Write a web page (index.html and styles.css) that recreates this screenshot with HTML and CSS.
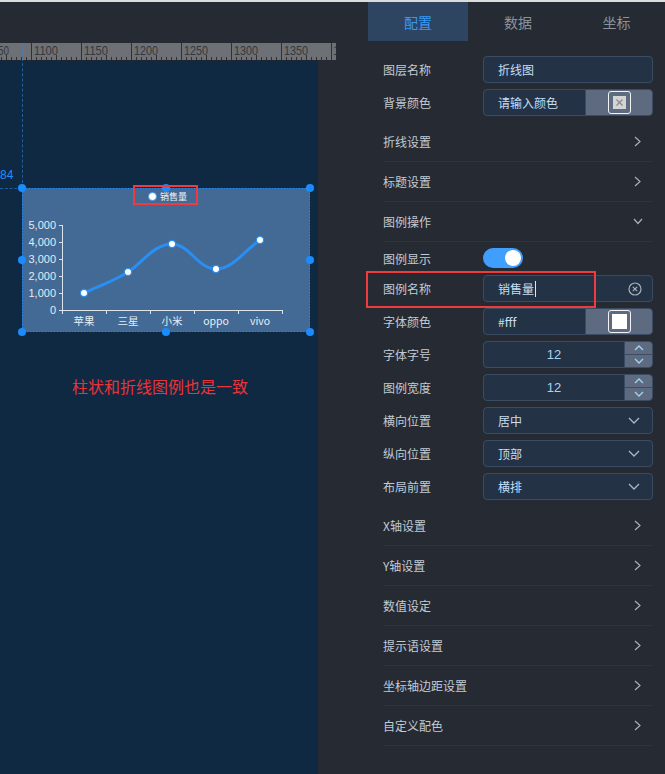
FILE: index.html
```html
<!DOCTYPE html>
<html lang="zh-CN">
<head>
<meta charset="utf-8">
<title>折线图配置</title>
<link rel="stylesheet" href="styles.css">
</head>
<body>
<div class="app">
  <section class="stage">
    <div class="stage-top"></div>
    <div class="ruler">
      <svg class="ruler-svg" width="336" height="17" viewBox="0 0 336 17">
        <g class="ruler-ticks">
          <path d="M31.5,0V17M81.5,0V17M131.5,0V17M181.5,0V17M231.5,0V17M281.5,0V17M331.5,0V17"/>
          <path d="M1.5,14V17M6.5,14V17M11.5,14V17M16.5,14V17M21.5,14V17M26.5,14V17M36.5,14V17M41.5,14V17M46.5,14V17M51.5,14V17M61.5,14V17M66.5,14V17M71.5,14V17M76.5,14V17M86.5,14V17M91.5,14V17M96.5,14V17M101.5,14V17M111.5,14V17M116.5,14V17M121.5,14V17M126.5,14V17M136.5,14V17M141.5,14V17M146.5,14V17M151.5,14V17M161.5,14V17M166.5,14V17M171.5,14V17M176.5,14V17M186.5,14V17M191.5,14V17M196.5,14V17M201.5,14V17M211.5,14V17M216.5,14V17M221.5,14V17M226.5,14V17M236.5,14V17M241.5,14V17M246.5,14V17M251.5,14V17M261.5,14V17M266.5,14V17M271.5,14V17M276.5,14V17M286.5,14V17M291.5,14V17M296.5,14V17M301.5,14V17M311.5,14V17M316.5,14V17M321.5,14V17M326.5,14V17"/>
          <path d="M6.5,12V17M56.5,12V17M106.5,12V17M156.5,12V17M206.5,12V17M256.5,12V17M306.5,12V17"/>
        </g>
        <g class="ruler-text">
          <text x="-2" y="12" textLength="11" lengthAdjust="spacingAndGlyphs">50</text>
          <text x="34" y="12" textLength="24" lengthAdjust="spacingAndGlyphs">1100</text>
          <text x="84" y="12" textLength="24" lengthAdjust="spacingAndGlyphs">1150</text>
          <text x="134" y="12" textLength="24" lengthAdjust="spacingAndGlyphs">1200</text>
          <text x="184" y="12" textLength="24" lengthAdjust="spacingAndGlyphs">1250</text>
          <text x="234" y="12" textLength="24" lengthAdjust="spacingAndGlyphs">1300</text>
          <text x="284" y="12" textLength="24" lengthAdjust="spacingAndGlyphs">1350</text>
          <text x="333" y="12">1</text>
        </g>
      </svg>
    </div>
    <div class="canvas-row">
      <div class="canvas">
        <span class="coord">84</span>
        <div class="guide-h"></div>
        <svg class="widget" width="300" height="156" viewBox="-6 -6 300 156">
          <rect class="w-bg" x="0.5" y="0.5" width="287" height="143"/>
          <g class="axis">
            <path d="M40.5,37V122.5H261"/>
            <path d="M37,37.5H40.5M37,54.5H40.5M37,71.5H40.5M37,88.5H40.5M37,105.5H40.5M37,122.5H40.5"/>
            <path d="M40.5,122V126M84.5,122V126M128.5,122V126M172.5,122V126M216.5,122V126M260.5,122V126"/>
          </g>
          <g class="ylab">
            <text x="34" y="41">5,000</text>
            <text x="34" y="58">4,000</text>
            <text x="34" y="75">3,000</text>
            <text x="34" y="92">2,000</text>
            <text x="34" y="109">1,000</text>
            <text x="34" y="126">0</text>
          </g>
          <g class="xlab">
            <text x="62" y="136.5">苹果</text>
            <text x="106" y="136.5">三星</text>
            <text x="150" y="136.5">小米</text>
            <text x="194" y="136.5">oppo</text>
            <text x="238" y="136.5">vivo</text>
          </g>
          <path class="line" d="M62,105 C77,98 92,93 106,84 C120,75 132,56 150,56 C167,56 176,81 194,81 C211,81 223,62 238,52"/>
          <g class="pts">
            <circle cx="62" cy="105" r="3.6"/>
            <circle cx="106" cy="84" r="3.6"/>
            <circle cx="150" cy="56" r="3.6"/>
            <circle cx="194" cy="81" r="3.6"/>
            <circle cx="238" cy="52" r="3.6"/>
          </g>
          <g class="handles">
            <circle cx="0" cy="0" r="4"/>
            <circle cx="144" cy="0" r="4"/>
            <circle cx="288" cy="0" r="4"/>
            <circle cx="0" cy="72" r="4"/>
            <circle cx="288" cy="72" r="4"/>
            <circle cx="0" cy="144" r="4"/>
            <circle cx="144" cy="144" r="4"/>
            <circle cx="288" cy="144" r="4"/>
          </g>
          <circle class="legend-dot" cx="130.5" cy="8.5" r="4"/>
          <text class="legend-text" x="138" y="12">销售量</text>
          <rect class="mark" x="112" y="-2" width="63" height="18"/>
        </svg>
        <p class="note">柱状和折线图例也是一致</p>
      </div>
    </div>
    <div class="guide-v"></div>
  </section>

  <aside class="panel">
    <nav class="tabs">
      <span class="tab active">配置</span>
      <span class="tab">数据</span>
      <span class="tab tab-last">坐标</span>
    </nav>
    <div class="form">
      <div class="row">
        <label class="label">图层名称</label>
        <div class="field"><span class="val">折线图</span></div>
      </div>
      <div class="row">
        <label class="label">背景颜色</label>
        <div class="field color">
          <span class="val">请输入颜色</span>
          <span class="swatch-wrap"><span class="swatch empty"><svg width="13" height="13" viewBox="0 0 13 13"><rect width="13" height="13" fill="#d4d4d4"/><path d="M3.5,3.5L9.5,9.5M9.5,3.5L3.5,9.5" stroke="#8a8a8a" stroke-width="1.2"/></svg></span></span>
        </div>
      </div>

      <div class="coll">折线设置<svg class="chev" width="7" height="11" viewBox="0 0 7 11"><path d="M1,1L6,5.5L1,10"/></svg></div>
      <div class="coll">标题设置<svg class="chev" width="7" height="11" viewBox="0 0 7 11"><path d="M1,1L6,5.5L1,10"/></svg></div>
      <div class="coll">图例操作<svg class="chev down" width="10" height="7" viewBox="0 0 10 7"><path d="M1,1L5,5.5L9,1"/></svg></div>

      <div class="sub">
        <div class="row toggle-row">
          <label class="label">图例显示</label>
          <span class="switch"><span class="knob"></span></span>
        </div>
        <div class="row marked">
          <label class="label">图例名称</label>
          <div class="field">
            <span class="val">销售量<i class="caret"></i></span>
            <svg class="clear" width="14" height="14" viewBox="0 0 14 14"><circle cx="7" cy="7" r="6"/><path d="M4.8,4.8L9.2,9.2M9.2,4.8L4.8,9.2"/></svg>
          </div>
          <span class="redbox"></span>
        </div>
        <div class="row">
          <label class="label">字体颜色</label>
          <div class="field color">
            <span class="val">#fff</span>
            <span class="swatch-wrap"><span class="swatch white"></span></span>
          </div>
        </div>
        <div class="row">
          <label class="label">字体字号</label>
          <div class="field num">
            <span class="numval">12</span>
            <span class="spin">
              <span class="spin-btn"><svg width="10" height="6" viewBox="0 0 10 6"><path d="M1,5L5,1L9,5"/></svg></span>
              <span class="spin-btn"><svg width="10" height="6" viewBox="0 0 10 6"><path d="M1,1L5,5L9,1"/></svg></span>
            </span>
          </div>
        </div>
        <div class="row">
          <label class="label">图例宽度</label>
          <div class="field num">
            <span class="numval">12</span>
            <span class="spin">
              <span class="spin-btn"><svg width="10" height="6" viewBox="0 0 10 6"><path d="M1,5L5,1L9,5"/></svg></span>
              <span class="spin-btn"><svg width="10" height="6" viewBox="0 0 10 6"><path d="M1,1L5,5L9,1"/></svg></span>
            </span>
          </div>
        </div>
        <div class="row">
          <label class="label">横向位置</label>
          <div class="field select"><span class="val">居中</span><svg class="sel-arrow" width="12" height="7" viewBox="0 0 12 7"><path d="M1,1L6,6L11,1"/></svg></div>
        </div>
        <div class="row">
          <label class="label">纵向位置</label>
          <div class="field select"><span class="val">顶部</span><svg class="sel-arrow" width="12" height="7" viewBox="0 0 12 7"><path d="M1,1L6,6L11,1"/></svg></div>
        </div>
        <div class="row">
          <label class="label">布局前置</label>
          <div class="field select"><span class="val">横排</span><svg class="sel-arrow" width="12" height="7" viewBox="0 0 12 7"><path d="M1,1L6,6L11,1"/></svg></div>
        </div>
      </div>

      <div class="coll">X轴设置<svg class="chev" width="7" height="11" viewBox="0 0 7 11"><path d="M1,1L6,5.5L1,10"/></svg></div>
      <div class="coll">Y轴设置<svg class="chev" width="7" height="11" viewBox="0 0 7 11"><path d="M1,1L6,5.5L1,10"/></svg></div>
      <div class="coll">数值设定<svg class="chev" width="7" height="11" viewBox="0 0 7 11"><path d="M1,1L6,5.5L1,10"/></svg></div>
      <div class="coll">提示语设置<svg class="chev" width="7" height="11" viewBox="0 0 7 11"><path d="M1,1L6,5.5L1,10"/></svg></div>
      <div class="coll">坐标轴边距设置<svg class="chev" width="7" height="11" viewBox="0 0 7 11"><path d="M1,1L6,5.5L1,10"/></svg></div>
      <div class="coll">自定义配色<svg class="chev" width="7" height="11" viewBox="0 0 7 11"><path d="M1,1L6,5.5L1,10"/></svg></div>
    </div>
  </aside>
</div>
</body>
</html>
```
FILE: styles.css
```css
* { box-sizing: border-box; }
html, body { margin: 0; padding: 0; }
body {
  width: 665px;
  height: 774px;
  overflow: hidden;
  background: #252a33;
  font-family: "Noto Sans CJK SC", "Microsoft YaHei", sans-serif;
}
.app {
  display: flex;
  width: 665px;
  height: 774px;
  border-top: 2px solid #dcdcdc;
  background: #252a33;
}

/* ---------- stage ---------- */
.stage {
  position: relative;
  width: 368px;
  display: flex;
  flex-direction: column;
}
.stage-top { height: 41px; background: #252a33; }
.ruler { height: 17px; width: 336px; background: #6d7074; overflow: hidden; }
.ruler-svg { display: block; }
.ruler-ticks path { stroke: #2e3035; stroke-width: 1; fill: none; }
.ruler-text text {
  font-family: "Liberation Sans", Arial, sans-serif;
  font-size: 13.5px;
  fill: #35373b;
}
.canvas-row { flex: 1; display: flex; }
.canvas {
  position: relative;
  width: 318px;
  background: #0f2942;
  border-top: 1px solid #1d2530;
}
.guide-v {
  position: absolute;
  left: 22px;
  top: 41px;
  height: 145px;
  border-left: 1px dashed rgba(48, 140, 230, 0.55);
}
.guide-h {
  position: absolute;
  left: 0;
  top: 127px;
  width: 22px;
  border-top: 1px dashed rgba(48, 140, 230, 0.55);
}
.coord {
  position: absolute;
  left: 0;
  top: 106px;
  font-family: "Liberation Sans", Arial, sans-serif;
  font-size: 12px;
  color: #1e8fff;
  line-height: 16px;
}
.widget {
  position: absolute;
  left: 16px;
  top: 121px;
  overflow: visible;
}
.w-bg { fill: #426a95; stroke: #2a8cf0; stroke-dasharray: 2 1; stroke-width: 1; }
.axis path { stroke: #dbe3ec; stroke-width: 1; fill: none; }
.ylab text {
  font-family: "Liberation Sans", Arial, sans-serif;
  font-size: 11px;
  fill: #e4ebf2;
  text-anchor: end;
}
.xlab text {
  font-family: "Noto Sans CJK SC", "Liberation Sans", sans-serif;
  font-size: 10.5px;
  fill: #e8eef4;
  text-anchor: middle;
}
.line { fill: none; stroke: #2a8ef2; stroke-width: 3; stroke-linecap: round; }
.pts circle { fill: #ffffff; stroke: #2a8ef2; stroke-width: 1.2; }
.handles circle { fill: #1a8cff; }
.legend-dot { fill: #ffffff; stroke: #2a8ef2; stroke-width: 0.8; }
.legend-text {
  font-family: "Noto Sans CJK SC", sans-serif;
  font-size: 9px;
  fill: #f2f5f8;
}
.mark { fill: none; stroke: #f03a3e; stroke-width: 2; }
.note {
  position: absolute;
  left: 72px;
  top: 314px;
  margin: 0;
  font-size: 16px;
  line-height: 22px;
  color: #ea3339;
}

/* ---------- panel ---------- */
.panel {
  width: 297px;
  background: #252a33;
}
.tabs { display: flex; height: 39px; }
.tab {
  width: 100px;
  display: flex;
  align-items: center;
  justify-content: center;
  font-size: 14px;
  color: #8a929d;
}
.tab-last { width: 97px; }
.tab.active { background: #2d4560; color: #3a98f4; }

.form { padding: 15px 12px 0 15px; }
.row {
  position: relative;
  display: flex;
  align-items: center;
  height: 27px;
  margin-bottom: 6px;
}
.label {
  width: 100px;
  font-size: 12px;
  color: #c2cbd5;
}
.field {
  position: relative;
  width: 170px;
  height: 27px;
  display: flex;
  align-items: center;
  border: 1px solid #3a4c64;
  border-radius: 4px;
  background: #243246;
  overflow: hidden;
}
.val {
  display: flex;
  align-items: center;
  flex: 1;
  padding-left: 14px;
  font-size: 12px;
  color: #c6dff4;
}
.caret {
  display: inline-block;
  width: 1px;
  height: 16px;
  margin-left: 1px;
  background: #d8e8f5;
}
.clear { margin-right: 10px; }
.clear circle { fill: none; stroke: #a9b1bc; stroke-width: 1.2; }
.clear path { stroke: #a9b1bc; stroke-width: 1.2; }

.color .val { height: 100%; border-right: 1px solid #3a4c64; }
.swatch-wrap {
  width: 66px;
  height: 100%;
  display: flex;
  align-items: center;
  justify-content: center;
  background: #5d6a80;
}
.swatch {
  width: 23px;
  height: 23px;
  border: 1px solid #f2f2f2;
  border-radius: 3px;
  display: flex;
  align-items: center;
  justify-content: center;
}
.swatch svg { display: block; }
.swatch.white::after {
  content: "";
  width: 15px;
  height: 15px;
  background: #ffffff;
}

.num .numval {
  flex: 1;
  text-align: center;
  font-family: "Liberation Sans", Arial, sans-serif;
  font-size: 13px;
  color: #a9d3f4;
}
.spin {
  width: 28px;
  height: 100%;
  display: flex;
  flex-direction: column;
  background: #5d6a80;
  border-left: 1px solid #3a4c64;
}
.spin-btn {
  flex: 1;
  display: flex;
  align-items: center;
  justify-content: center;
}
.spin-btn + .spin-btn { border-top: 1px solid #3e4c62; }
.spin-btn path { fill: none; stroke: #9fd6f8; stroke-width: 1.3; }

.select .sel-arrow { margin-right: 12px; }
.sel-arrow path { fill: none; stroke: #aab8c9; stroke-width: 1.3; }

.switch {
  position: relative;
  width: 40px;
  height: 20px;
  border-radius: 10px;
  background: #409eff;
}
.knob {
  position: absolute;
  right: 2px;
  top: 2px;
  width: 16px;
  height: 16px;
  border-radius: 50%;
  background: #ffffff;
}

.coll {
  display: flex;
  align-items: center;
  justify-content: space-between;
  height: 40px;
  padding-right: 12px;
  border-bottom: 1px solid #2f343e;
  font-size: 12px;
  color: #c2cbd5;
}
.chev path { fill: none; stroke: #a9b1bc; stroke-width: 1.2; }
.chev.down { margin-right: -2px; }

.sub { padding-top: 3px; }
.toggle-row { height: 26px; margin-bottom: 4px; }
.redbox {
  position: absolute;
  left: -17px;
  top: -4px;
  width: 230px;
  height: 37px;
  border: 2px solid #ef3a3e;
}
```
